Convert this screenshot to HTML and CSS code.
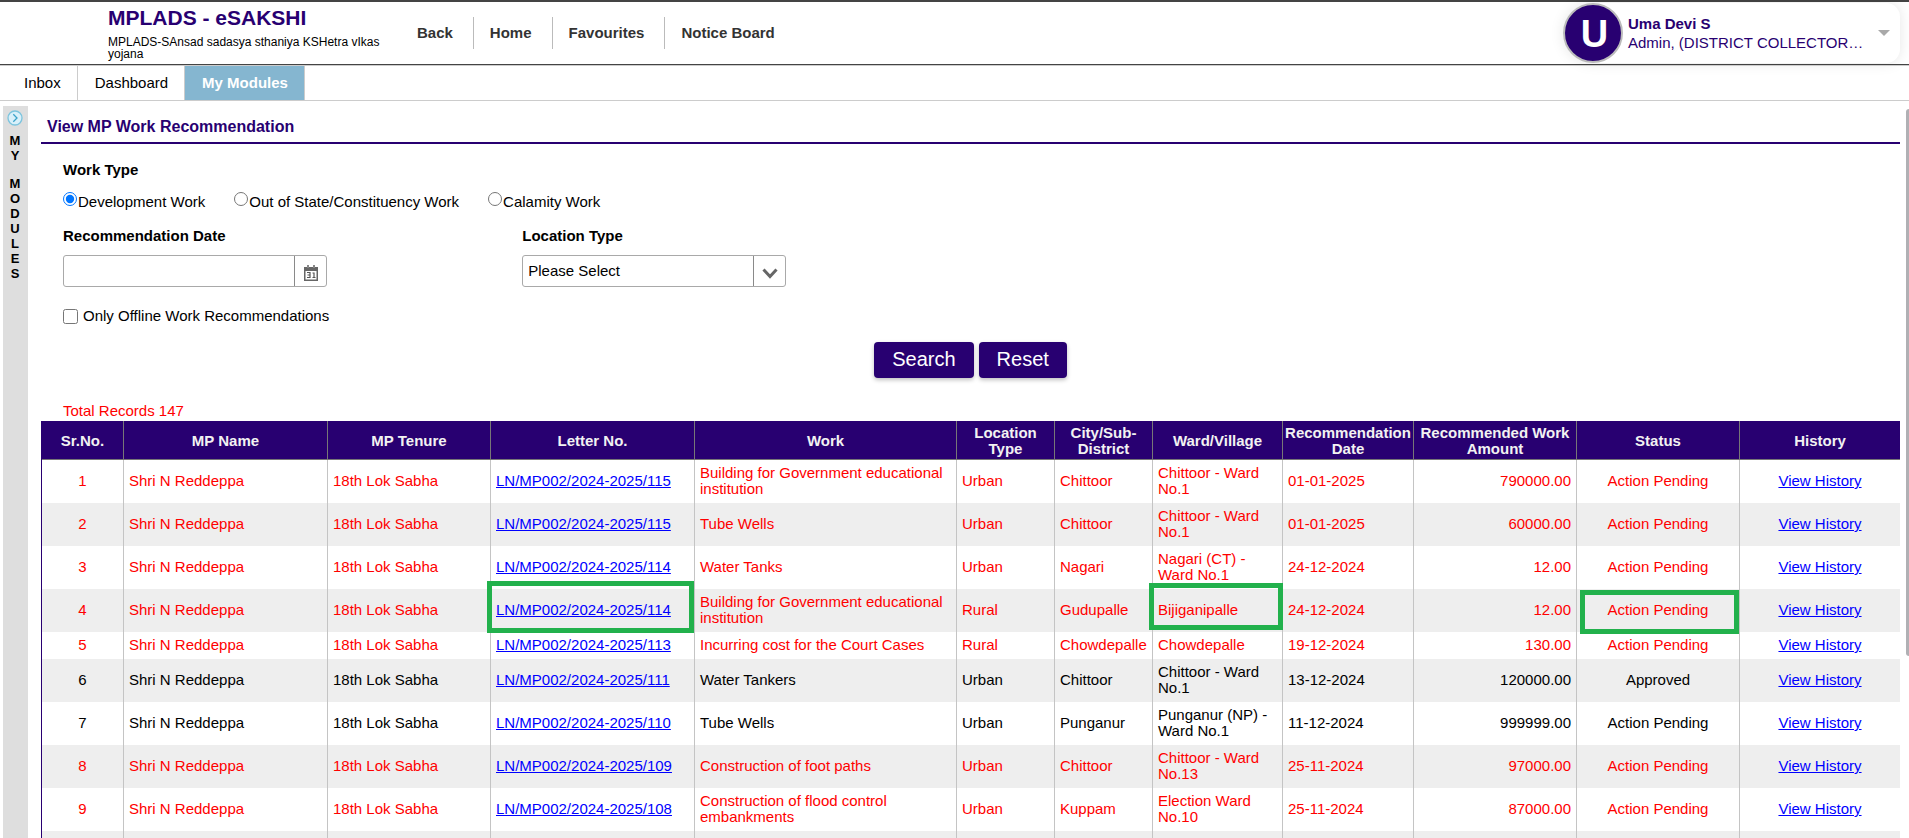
FILE: index.html
```html
<!DOCTYPE html>
<html lang="en">
<head>
<meta charset="utf-8">
<title>MPLADS - eSAKSHI</title>
<link rel="stylesheet" href="styles.css">
</head>
<body>
<header class="topbar">
  <div class="brand">
    <h1 class="brand-name">MPLADS - eSAKSHI</h1>
    <p class="brand-sub">MPLADS-SAnsad sadasya sthaniya KSHetra vIkas yojana</p>
  </div>
  <nav class="mainnav">
    <a href="#">Back</a>
    <a href="#">Home</a>
    <a href="#">Favourites</a>
    <a href="#">Notice Board</a>
  </nav>
  <button class="user" type="button">
    <span class="avatar">U</span>
    <span class="user-text">
      <span class="user-name">Uma Devi S</span>
      <span class="user-role">Admin, (DISTRICT COLLECTOR…</span>
    </span>
    <svg class="caret" width="12" height="6" viewBox="0 0 12 6"><path d="M0 0h12L6 6z" fill="#a9a9a9"/></svg>
  </button>
</header>
<nav class="tabs">
  <a class="tab" href="#">Inbox</a>
  <a class="tab" href="#">Dashboard</a>
  <a class="tab active" href="#">My Modules</a>
</nav>
<div class="layout">
  <aside class="rail">
    <button class="rail-toggle" type="button" aria-label="Expand My Modules">
      <svg width="16" height="16" viewBox="0 0 16 16"><circle cx="8" cy="8" r="7" fill="#d9f0fa" stroke="#7cc4de" stroke-width="1.3"/><path d="M6.3 4.3L10 8l-3.700 3.700" fill="none" stroke="#3ba3c9" stroke-width="1.300"/></svg>
    </button>
    <div class="rail-word"><span>M</span><span>Y</span></div>
    <div class="rail-word long"><span>M</span><span>O</span><span>D</span><span>U</span><span>L</span><span>E</span><span>S</span></div>
  </aside>
  <main class="content">
    <h2 class="title">View MP Work Recommendation</h2>
    <form class="filters">
      <fieldset class="worktype">
        <legend>Work Type</legend>
        <div class="radios">
          <label><input type="radio" name="wt" checked>Development Work</label>
          <label><input type="radio" name="wt">Out of State/Constituency Work</label>
          <label><input type="radio" name="wt">Calamity Work</label>
        </div>
      </fieldset>
      <div class="fields">
        <div class="field">
          <label for="rdate">Recommendation Date</label>
          <div class="combo">
            <input id="rdate" type="text">
            <button type="button" aria-label="Open calendar">
              <svg width="14" height="16" viewBox="0 0 14 16"><path d="M0 2h14v14H0z" fill="#666"/><path d="M3 0h2v3H3zM9 0h2v3H9z" fill="#888"/><path d="M1.500 6h11v8.500h-11z" fill="#fff"/><path d="M3 7.500h3v5H3M3.500 10H6M8.500 8h1.500v4.500M8.500 12.500h3" fill="none" stroke="#555" stroke-width="1.200"/></svg>
            </button>
          </div>
        </div>
        <div class="field">
          <label for="loc">Location Type</label>
          <div class="selectbox">
            <select id="loc"><option>Please Select</option></select>
            <span class="arrow"><svg width="16" height="11" viewBox="0 0 16 11"><path d="M1.500 1.500L8 8.500l6.500-7" fill="none" stroke="#666" stroke-width="3"/></svg></span>
          </div>
        </div>
      </div>
      <label class="check"><input type="checkbox">Only Offline Work Recommendations</label>
      <div class="actions">
        <button type="button">Search</button>
        <button type="button">Reset</button>
      </div>
    </form>
    <p class="total">Total Records 147</p>
    <table class="grid">
      <colgroup><col class="c-sr"><col class="c-name"><col class="c-md"><col class="c-name"><col class="c-work"><col class="c-sm"><col class="c-sm"><col class="c-ward"><col class="c-date"><col class="c-md"><col class="c-md"><col class="c-hist"></colgroup>
      <thead>
        <tr><th>Sr.No.</th><th>MP Name</th><th>MP Tenure</th><th>Letter No.</th><th>Work</th><th>Location Type</th><th>City/Sub-District</th><th>Ward/Village</th><th class="tight">Recommendation Date</th><th>Recommended Work Amount</th><th>Status</th><th>History</th></tr>
      </thead>
      <tbody>
        <tr class="due"><td class="mid">1</td><td>Shri N Reddeppa</td><td>18th Lok Sabha</td><td><a href="#">LN/MP002/2024-2025/115</a></td><td>Building for Government educational institution</td><td>Urban</td><td>Chittoor</td><td>Chittoor - Ward No.1</td><td>01-01-2025</td><td class="num">790000.00</td><td class="mid">Action Pending</td><td class="mid"><a href="#">View History</a></td></tr>
        <tr class="due"><td class="mid">2</td><td>Shri N Reddeppa</td><td>18th Lok Sabha</td><td><a href="#">LN/MP002/2024-2025/115</a></td><td>Tube Wells</td><td>Urban</td><td>Chittoor</td><td>Chittoor - Ward No.1</td><td>01-01-2025</td><td class="num">60000.00</td><td class="mid">Action Pending</td><td class="mid"><a href="#">View History</a></td></tr>
        <tr class="due"><td class="mid">3</td><td>Shri N Reddeppa</td><td>18th Lok Sabha</td><td><a href="#">LN/MP002/2024-2025/114</a></td><td>Water Tanks</td><td>Urban</td><td>Nagari</td><td>Nagari (CT) - Ward No.1</td><td>24-12-2024</td><td class="num">12.00</td><td class="mid">Action Pending</td><td class="mid"><a href="#">View History</a></td></tr>
        <tr class="due"><td class="mid">4</td><td>Shri N Reddeppa</td><td>18th Lok Sabha</td><td class="marked"><a href="#">LN/MP002/2024-2025/114</a><span class="mark mark-letter"></span></td><td>Building for Government educational institution</td><td>Rural</td><td>Gudupalle</td><td class="marked">Bijiganipalle<span class="mark mark-ward"></span></td><td>24-12-2024</td><td class="num">12.00</td><td class="mid marked">Action Pending<span class="mark mark-status"></span></td><td class="mid"><a href="#">View History</a></td></tr>
        <tr class="due"><td class="mid">5</td><td>Shri N Reddeppa</td><td>18th Lok Sabha</td><td><a href="#">LN/MP002/2024-2025/113</a></td><td>Incurring cost for the Court Cases</td><td>Rural</td><td>Chowdepalle</td><td>Chowdepalle</td><td>19-12-2024</td><td class="num">130.00</td><td class="mid">Action Pending</td><td class="mid"><a href="#">View History</a></td></tr>
        <tr><td class="mid">6</td><td>Shri N Reddeppa</td><td>18th Lok Sabha</td><td><a href="#">LN/MP002/2024-2025/111</a></td><td>Water Tankers</td><td>Urban</td><td>Chittoor</td><td>Chittoor - Ward No.1</td><td>13-12-2024</td><td class="num">120000.00</td><td class="mid">Approved</td><td class="mid"><a href="#">View History</a></td></tr>
        <tr><td class="mid">7</td><td>Shri N Reddeppa</td><td>18th Lok Sabha</td><td><a href="#">LN/MP002/2024-2025/110</a></td><td>Tube Wells</td><td>Urban</td><td>Punganur</td><td>Punganur (NP) - Ward No.1</td><td>11-12-2024</td><td class="num">999999.00</td><td class="mid">Action Pending</td><td class="mid"><a href="#">View History</a></td></tr>
        <tr class="due"><td class="mid">8</td><td>Shri N Reddeppa</td><td>18th Lok Sabha</td><td><a href="#">LN/MP002/2024-2025/109</a></td><td>Construction of foot paths</td><td>Urban</td><td>Chittoor</td><td>Chittoor - Ward No.13</td><td>25-11-2024</td><td class="num">97000.00</td><td class="mid">Action Pending</td><td class="mid"><a href="#">View History</a></td></tr>
        <tr class="due"><td class="mid">9</td><td>Shri N Reddeppa</td><td>18th Lok Sabha</td><td><a href="#">LN/MP002/2024-2025/108</a></td><td>Construction of flood control embankments</td><td>Urban</td><td>Kuppam</td><td>Election Ward No.10</td><td>25-11-2024</td><td class="num">87000.00</td><td class="mid">Action Pending</td><td class="mid"><a href="#">View History</a></td></tr>
        <tr><td></td><td></td><td></td><td></td><td></td><td></td><td></td><td></td><td></td><td></td><td></td><td></td></tr>
      </tbody>
    </table>
  </main>
  <div class="track"><div class="thumb"></div></div>
</div>
</body>
</html>
```

FILE: styles.css
```css
* { box-sizing: border-box; }
body {
  margin: 0;
  height: 100vh;
  overflow: hidden;
  display: flex;
  flex-direction: column;
  background: #fff;
  color: #000;
  font: 15px/16px "Liberation Sans", Arial, sans-serif;
}
h1, h2, p, fieldset, legend { margin: 0; padding: 0; border: 0; }
button, input, select { font: inherit; }
button { cursor: pointer; }

.topbar {
  flex: none;
  display: flex;
  align-items: center;
  height: 65px;
  padding: 0 9px 0 108px;
  border-top: 2px solid #444;
  border-bottom: 1px solid #444;
}
.brand { width: 309px; }
.brand-name { color: #280071; font-size: 21px; line-height: 24px; }
.brand-sub { width: 280px; margin-top: 6px; font-size: 12px; line-height: 12px; }
.mainnav { display: flex; }
.mainnav a {
  padding: 8px 20px 8px 16px;
  border-right: 1px solid #bbb;
  color: #333;
  font-weight: bold;
  text-decoration: none;
}
.mainnav a:first-child { padding-left: 0; }
.mainnav a:last-child { border-right: 0; }
.user {
  display: flex;
  align-items: center;
  width: 337px;
  height: 60px;
  margin-left: auto;
  padding: 0 10px 0 0;
  border: 0;
  border-radius: 30px 14px 14px 30px;
  background: #fff;
  box-shadow: 0 0 14px rgba(0, 0, 0, 0.1);
  color: #280071;
  text-align: left;
}
.avatar {
  width: 60px;
  height: 60px;
  padding-left: 3px;
  border: 2px solid #bbb;
  border-radius: 50%;
  background: #280071;
  color: #fff;
  font-size: 38px;
  font-weight: bold;
  line-height: 58px;
  text-align: center;
}
.user-text { display: flex; flex-direction: column; margin-left: 5px; line-height: 19px; white-space: nowrap; }
.user-name { font-weight: bold; }
.caret { margin-left: auto; }

.tabs {
  flex: none;
  display: flex;
  height: 36px;
  border-top: 1px solid #ccc;
  border-bottom: 1px solid #ccc;
}
.tab {
  padding: 0 16px 0 17px;
  border-right: 1px solid #ccc;
  color: #000;
  line-height: 34px;
  text-decoration: none;
}
.tab:first-child { padding-left: 24px; }
.tab.active { background: #85b6d0; color: #fff; font-weight: bold; }

.layout { flex: 1; min-height: 0; display: flex; padding: 5px 0 0 3px; }
.rail {
  width: 25px;
  flex: none;
  display: flex;
  flex-direction: column;
  align-items: center;
  padding-right: 1px;
  background: #dedede;
  font-size: 13px;
  font-weight: bold;
}
.rail-toggle { display: flex; padding: 0; margin: 4px 0 7px; border: 0; background: none; }
.rail-word { display: flex; flex-direction: column; align-items: center; line-height: 15px; }
.rail-word.long { margin-top: 13px; }

.content { flex: 1; min-width: 0; padding: 0 6px 0 13px; }
.title {
  padding: 12px 6px 7px;
  border-bottom: 2px solid #280071;
  color: #280071;
  font-size: 16px;
  line-height: 17px;
}
.filters { padding: 17px 0 0 22px; }
.worktype legend { font-weight: bold; line-height: 18px; }
.radios { display: flex; gap: 29px; padding: 13px 0 17px; }
.radios label { display: flex; align-items: flex-end; line-height: 16px; }
.radios input { width: 14px; height: 14px; margin: 0 1px 4px 0; }
.fields { display: grid; grid-template-columns: repeat(4, 1fr); }
.field label { display: block; margin-bottom: 10px; font-weight: bold; line-height: 18px; }
.combo, .selectbox {
  display: flex;
  width: 264px;
  height: 32px;
  border: 1px solid #a9a9a9;
  border-radius: 3px;
}
.combo input { flex: 1; min-width: 0; padding: 0 5px; border: 0; outline: 0; background: none; }
.combo button {
  display: flex;
  align-items: center;
  justify-content: center;
  width: 32px;
  padding: 4px 0 0;
  border: 0;
  border-left: 1px solid #8a8a8a;
  background: none;
}
.selectbox { display: grid; grid-template-columns: 1fr 32px; }
.selectbox select {
  grid-area: 1 / 1 / 2 / 3;
  padding: 0 5px;
  border: 0;
  outline: 0;
  background: none;
  color: #000;
  appearance: none;
}
.arrow {
  grid-area: 1 / 2;
  display: flex;
  align-items: center;
  justify-content: center;
  padding-top: 4px;
  border-left: 1px solid #8a8a8a;
  pointer-events: none;
}
.check { display: flex; align-items: center; gap: 5px; margin-top: 20px; line-height: 18px; }
.check input { width: 15px; height: 15px; margin: 0; }
.actions { display: flex; justify-content: center; gap: 5px; margin-top: 17px; padding-right: 22px; }
.actions button {
  height: 36px;
  padding: 0 18px 2px;
  border: 0;
  border-radius: 4px;
  background: #280071;
  box-shadow: 0 2px 4px rgba(0, 0, 0, 0.25);
  color: #fff;
  font-size: 20px;
}
.total { padding: 25px 0 2px 22px; color: #f00; }

.grid {
  width: 100%;
  table-layout: fixed;
  border-collapse: separate;
  border-spacing: 0;
  border-left: 1px solid #280071;
}
.c-sr { width: 81px; }
.c-name { width: 204px; }
.c-md { width: 163px; }
.c-work { width: 262px; }
.c-sm { width: 98px; }
.c-ward { width: 130px; }
.c-date { width: 131px; }
.c-hist { width: 161px; }
.grid th {
  padding: 4px 5px 2px;
  border-bottom: 1px solid #777;
  border-left: 1px solid #777;
  background: #280071;
  color: #f2f2f2;
}
.grid th.tight { padding: 4px 0 2px; }
.grid td { height: 27px; padding: 5px 5px 6px; border-left: 1px solid #c4c4c4; }
.grid th:first-child, .grid td:first-child { border-left: 0; }
.grid tbody tr:nth-child(even) { background: #eee; }
.grid .due { color: #f00; }
.grid a { color: #00f; }
.grid .mid { text-align: center; }
.grid .num { text-align: right; }
.marked { position: relative; }
.mark { position: absolute; border: 5px solid #22b14c; pointer-events: none; }
.mark-letter { inset: -8px 0 -1px -4px; }
.mark-ward { inset: -6px -1px 2px -4px; }
.mark-status { inset: 1px 0 -2px 3px; }

.track { flex: none; width: 3px; padding-top: 3px; }
.thumb { height: 75%; border-radius: 3px 0 0 3px; background: #b0b0b4; }
```
